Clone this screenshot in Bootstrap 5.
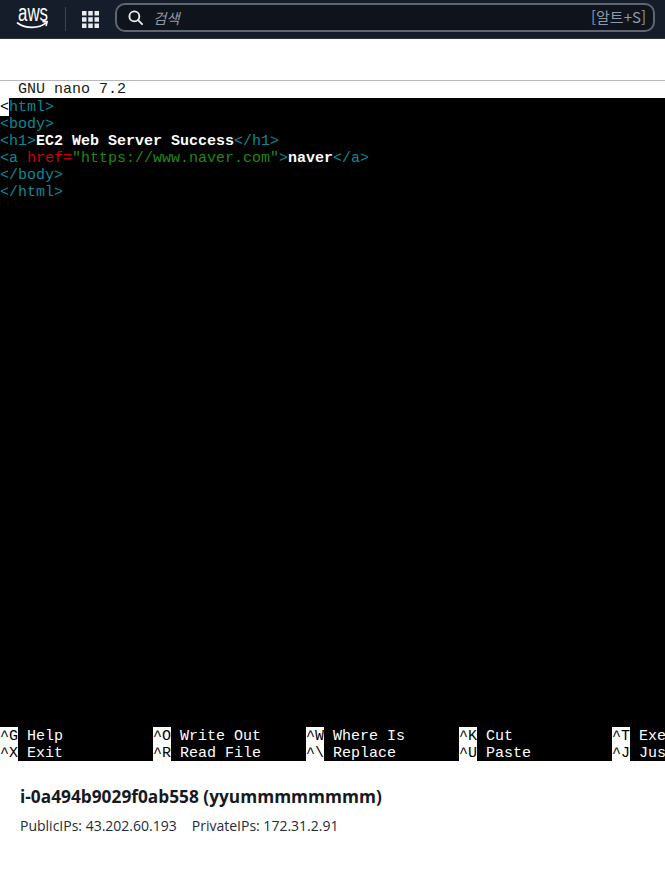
<!DOCTYPE html>
<html lang="ko">
<head>
<meta charset="utf-8">
<title>EC2 Instance Connect</title>
<link href="https://cdn.jsdelivr.net/npm/bootstrap@5.3.0/dist/css/bootstrap.min.css" rel="stylesheet">
<style>
html,body{height:876px;overflow:hidden;background:#fff}
.topbar{height:39px;background:#161d2a;border-bottom:1px solid #2f3640}
.logo-box{width:65px;height:38px}
.bar-sep{width:1px;height:24px;background:#3c4450}
.grid-box{width:49px}
.search-box{flex:1;height:29px;margin-right:10px;margin-top:-3px;background:#0f141c;border:2px solid #5f6670;border-radius:10px;font-family:"Noto Sans CJK KR","Liberation Sans",sans-serif;color:#8d99a8;font-size:14px}
.search-ph{font-style:italic;margin-left:10px;font-size:14.500px}
.search-key{font-size:15px;margin-right:-1px}
.search-icon{margin-left:3px}
.gap-zone{height:41px}
.term-wrap{border-top:1px solid #b8b8c0;font-family:"Liberation Mono",monospace;font-size:15px;line-height:17px}
.term-title{height:17px;color:#1a1a1a;padding-left:18px;white-space:pre}
.term-body{height:663px;background:#000;color:#fff;overflow:hidden}
.term-lines{height:629px;padding-top:1px;white-space:pre}
.cursor-cell{background:#fff;color:#000;box-shadow:0 -1px 0 #fff}
.tc{color:#0a8a96}
.tr{color:#d00000}
.tg{color:#1f8a12}
.tw{color:#fff;font-weight:700}
.keys-row{display:flex;height:17px;overflow:hidden;white-space:pre;line-height:19px}
.key-cell{flex:0 0 153px;width:153px;color:#fff}
.key-cap{background:#fff;color:#000;display:inline-block;width:18px;height:19px}
.inst-info{padding:25px 20px 0;color:#16191f}
.inst-title{font-family:"Open Sans","Liberation Sans",sans-serif;font-size:17.300px;line-height:22px;font-weight:700;margin:0}
.inst-ips{font-size:14px;line-height:20px;margin-top:8px;color:#232b37;font-family:"Open Sans","Liberation Sans",sans-serif}
.ip-second{margin-left:15px}
</style>
</head>
<body>
<nav class="topbar d-flex align-items-center">
  <div class="logo-box d-flex align-items-center justify-content-center">
    <svg width="34" height="26" viewBox="0 0 34 26" role="img" aria-label="aws">
      <text x="17" y="15" text-anchor="middle" fill="#fff" font-family="Liberation Sans, sans-serif" font-size="23" textLength="30" lengthAdjust="spacingAndGlyphs">aws</text>
      <path d="M1.500 17c8.500 6 21 6 29-.3" fill="none" stroke="#fff" stroke-width="1.700" stroke-linecap="round"/>
      <path d="M27 15.800l4.200-.4-1 4.100" fill="none" stroke="#fff" stroke-width="1.500" stroke-linecap="round" stroke-linejoin="round"/>
    </svg>
  </div>
  <div class="bar-sep"></div>
  <div class="grid-box d-flex justify-content-center">
    <svg width="17" height="17" viewBox="0 0 17 17" fill="#e9ebed" aria-hidden="true">
      <rect x="0" y="0" width="4.500" height="4.500"/><rect x="6.250" y="0" width="4.500" height="4.500"/><rect x="12.500" y="0" width="4.500" height="4.500"/>
      <rect x="0" y="6.250" width="4.500" height="4.500"/><rect x="6.250" y="6.250" width="4.500" height="4.500"/><rect x="12.500" y="6.250" width="4.500" height="4.500"/>
      <rect x="0" y="12.500" width="4.500" height="4.500"/><rect x="6.250" y="12.500" width="4.500" height="4.500"/><rect x="12.500" y="12.500" width="4.500" height="4.500"/>
    </svg>
  </div>
  <div class="search-box d-flex align-items-center px-2">
    <svg class="search-icon" width="15" height="15" viewBox="0 0 16 16" fill="none" stroke="#e9ebed" stroke-width="2" aria-hidden="true"><circle cx="6.800" cy="6.800" r="5.300"/><path d="M10.800 10.800l4.200 4.200" stroke-linecap="round"/></svg>
    <span class="search-ph">검색</span>
    <span class="search-key ms-auto">[알트+S]</span>
  </div>
</nav>
<div class="gap-zone"></div>
<section class="term-wrap">
  <div class="term-title">GNU nano 7.2</div>
  <div class="term-body">
    <div class="term-lines"><span class="cursor-cell">&lt;</span><span class="tc">html&gt;</span>
<span class="tc">&lt;body&gt;</span>
<span class="tc">&lt;h1&gt;</span><span class="tw">EC2 Web Server Success</span><span class="tc">&lt;/h1&gt;</span>
<span class="tc">&lt;a </span><span class="tr">href=</span><span class="tg">"https://www.naver.com"</span><span class="tc">&gt;</span><span class="tw">naver</span><span class="tc">&lt;/a&gt;</span>
<span class="tc">&lt;/body&gt;</span>
<span class="tc">&lt;/html&gt;</span></div>
    <div class="keys-row"><div class="key-cell"><span class="key-cap">^G</span> Help</div><div class="key-cell"><span class="key-cap">^O</span> Write Out</div><div class="key-cell"><span class="key-cap">^W</span> Where Is</div><div class="key-cell"><span class="key-cap">^K</span> Cut</div><div class="key-cell"><span class="key-cap">^T</span> Execute</div></div>
    <div class="keys-row"><div class="key-cell"><span class="key-cap">^X</span> Exit</div><div class="key-cell"><span class="key-cap">^R</span> Read File</div><div class="key-cell"><span class="key-cap">^\</span> Replace</div><div class="key-cell"><span class="key-cap">^U</span> Paste</div><div class="key-cell"><span class="key-cap">^J</span> Justify</div></div>
  </div>
</section>
<section class="inst-info">
  <h1 class="inst-title">i-0a494b9029f0ab558 (yyummmmmmmm)</h1>
  <div class="inst-ips">PublicIPs: 43.202.60.193<span class="ip-second">PrivateIPs: 172.31.2.91</span></div>
</section>
<script src="https://cdn.jsdelivr.net/npm/bootstrap@5.3.0/dist/js/bootstrap.bundle.min.js"></script>
</body>
</html>
